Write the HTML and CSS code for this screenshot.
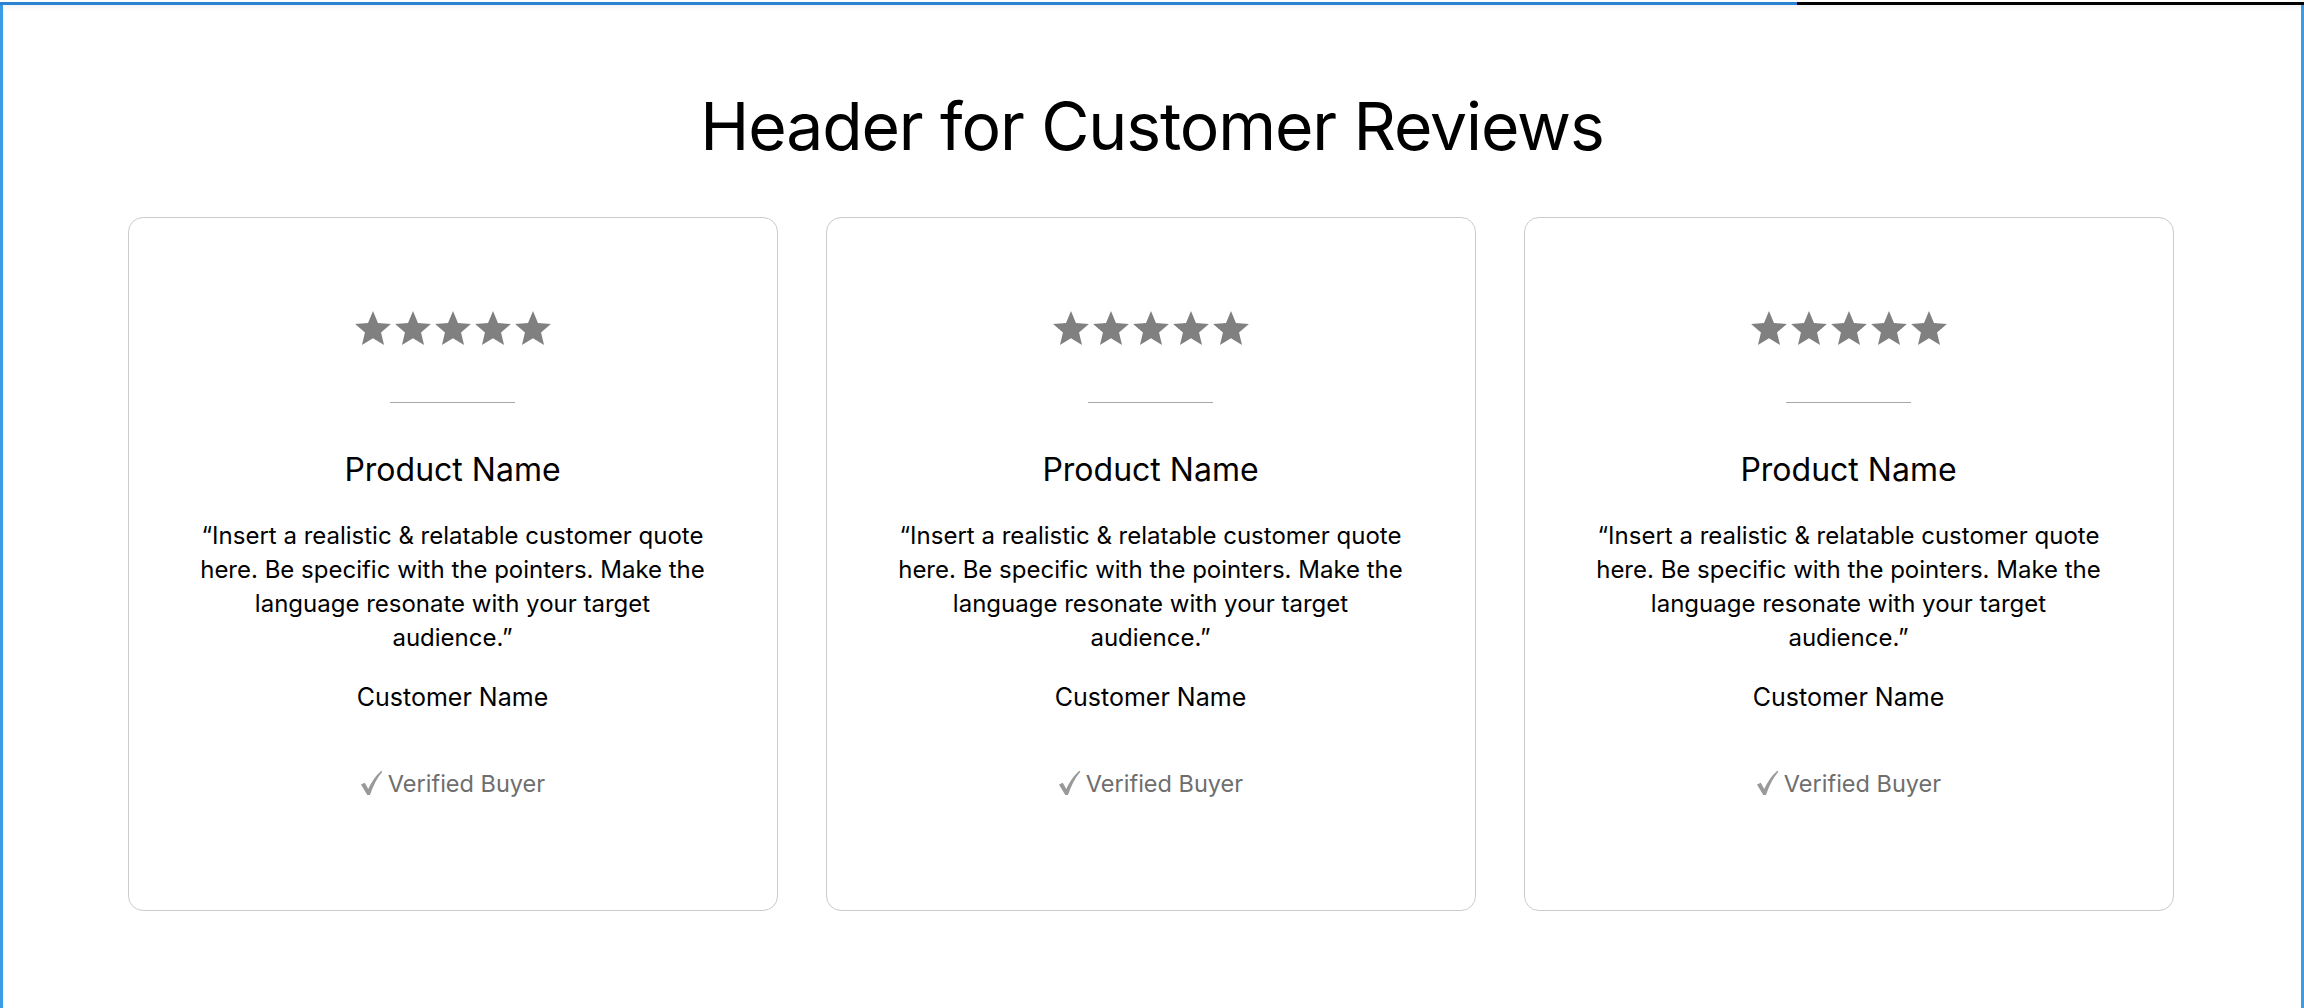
FILE: index.html
```html
<!DOCTYPE html>
<html lang="en">
<head>
    <meta charset="UTF-8">
    <meta name="viewport" content="width=device-width, initial-scale=1.0">
    <title>Customer Reviews</title>
    <link rel="stylesheet" href="styles.css">
</head>
<body>

    <div class="progres">
        <div class="progres-bara" style="width: 78%"></div>
    </div>

    <div class="pagina">
        <h1 class="titlu">Header for Customer Reviews</h1>

        <div class="recenzii">

            <div class="card">
                <div class="stele">
                    <svg viewBox="0 0 22.83 21.71"><path d="M11.41 0L14.58 7.63 22.83 8.29 16.55 13.67 18.46 21.71 11.41 17.4 4.36 21.71 6.27 13.67 0 8.29 8.24 7.63Z"/></svg>
                    <svg viewBox="0 0 22.83 21.71"><path d="M11.41 0L14.58 7.63 22.83 8.29 16.55 13.67 18.46 21.71 11.41 17.4 4.36 21.71 6.27 13.67 0 8.29 8.24 7.63Z"/></svg>
                    <svg viewBox="0 0 22.83 21.71"><path d="M11.41 0L14.58 7.63 22.83 8.29 16.55 13.67 18.46 21.71 11.41 17.4 4.36 21.71 6.27 13.67 0 8.29 8.24 7.63Z"/></svg>
                    <svg viewBox="0 0 22.83 21.71"><path d="M11.41 0L14.58 7.63 22.83 8.29 16.55 13.67 18.46 21.71 11.41 17.4 4.36 21.71 6.27 13.67 0 8.29 8.24 7.63Z"/></svg>
                    <svg viewBox="0 0 22.83 21.71"><path d="M11.41 0L14.58 7.63 22.83 8.29 16.55 13.67 18.46 21.71 11.41 17.4 4.36 21.71 6.27 13.67 0 8.29 8.24 7.63Z"/></svg>
                </div>
                <div class="linie"></div>
                <div class="produs">Product Name</div>
                <p class="citat">“Insert a realistic &amp; relatable customer quote here. Be specific with the pointers. Make the language resonate with your target audience.”</p>
                <div class="client">Customer Name</div>
                <div class="verificat">
                    <svg class="bifa" viewBox="0 0 24 26"><path d="M1 14.5L5 12.8 8.6 19.2Q14 7.5 22.2 0.2L23.3 1.3Q15.4 10.5 10.4 25.6L7.6 25.6Z"/></svg>
                    <span>Verified Buyer</span>
                </div>
            </div>

            <div class="card">
                <div class="stele">
                    <svg viewBox="0 0 22.83 21.71"><path d="M11.41 0L14.58 7.63 22.83 8.29 16.55 13.67 18.46 21.71 11.41 17.4 4.36 21.71 6.27 13.67 0 8.29 8.24 7.63Z"/></svg>
                    <svg viewBox="0 0 22.83 21.71"><path d="M11.41 0L14.58 7.63 22.83 8.29 16.55 13.67 18.46 21.71 11.41 17.4 4.36 21.71 6.27 13.67 0 8.29 8.24 7.63Z"/></svg>
                    <svg viewBox="0 0 22.83 21.71"><path d="M11.41 0L14.58 7.63 22.83 8.29 16.55 13.67 18.46 21.71 11.41 17.4 4.36 21.71 6.27 13.67 0 8.29 8.24 7.63Z"/></svg>
                    <svg viewBox="0 0 22.83 21.71"><path d="M11.41 0L14.58 7.63 22.83 8.29 16.55 13.67 18.46 21.71 11.41 17.4 4.36 21.71 6.27 13.67 0 8.29 8.24 7.63Z"/></svg>
                    <svg viewBox="0 0 22.83 21.71"><path d="M11.41 0L14.58 7.63 22.83 8.29 16.55 13.67 18.46 21.71 11.41 17.4 4.36 21.71 6.27 13.67 0 8.29 8.24 7.63Z"/></svg>
                </div>
                <div class="linie"></div>
                <div class="produs">Product Name</div>
                <p class="citat">“Insert a realistic &amp; relatable customer quote here. Be specific with the pointers. Make the language resonate with your target audience.”</p>
                <div class="client">Customer Name</div>
                <div class="verificat">
                    <svg class="bifa" viewBox="0 0 24 26"><path d="M1 14.5L5 12.8 8.6 19.2Q14 7.5 22.2 0.2L23.3 1.3Q15.4 10.5 10.4 25.6L7.6 25.6Z"/></svg>
                    <span>Verified Buyer</span>
                </div>
            </div>

            <div class="card">
                <div class="stele">
                    <svg viewBox="0 0 22.83 21.71"><path d="M11.41 0L14.58 7.63 22.83 8.29 16.55 13.67 18.46 21.71 11.41 17.4 4.36 21.71 6.27 13.67 0 8.29 8.24 7.63Z"/></svg>
                    <svg viewBox="0 0 22.83 21.71"><path d="M11.41 0L14.58 7.63 22.83 8.29 16.55 13.67 18.46 21.71 11.41 17.4 4.36 21.71 6.27 13.67 0 8.29 8.24 7.63Z"/></svg>
                    <svg viewBox="0 0 22.83 21.71"><path d="M11.41 0L14.58 7.63 22.83 8.29 16.55 13.67 18.46 21.71 11.41 17.4 4.36 21.71 6.27 13.67 0 8.29 8.24 7.63Z"/></svg>
                    <svg viewBox="0 0 22.83 21.71"><path d="M11.41 0L14.58 7.63 22.83 8.29 16.55 13.67 18.46 21.71 11.41 17.4 4.36 21.71 6.27 13.67 0 8.29 8.24 7.63Z"/></svg>
                    <svg viewBox="0 0 22.83 21.71"><path d="M11.41 0L14.58 7.63 22.83 8.29 16.55 13.67 18.46 21.71 11.41 17.4 4.36 21.71 6.27 13.67 0 8.29 8.24 7.63Z"/></svg>
                </div>
                <div class="linie"></div>
                <div class="produs">Product Name</div>
                <p class="citat">“Insert a realistic &amp; relatable customer quote here. Be specific with the pointers. Make the language resonate with your target audience.”</p>
                <div class="client">Customer Name</div>
                <div class="verificat">
                    <svg class="bifa" viewBox="0 0 24 26"><path d="M1 14.5L5 12.8 8.6 19.2Q14 7.5 22.2 0.2L23.3 1.3Q15.4 10.5 10.4 25.6L7.6 25.6Z"/></svg>
                    <span>Verified Buyer</span>
                </div>
            </div>

        </div>
    </div>

</body>
</html>
```

FILE: styles.css
```css
body {
    margin: 0;
    padding-top: 2px;
    background-color: white;
    font-family: Inter, "Noto Sans", sans-serif;
    color: black;
    height: 100vh;
    box-sizing: border-box;
    display: flex;
    flex-direction: column;
    overflow: hidden;
}

.progres {
    height: 3px;
    background-color: black;
    box-shadow: 0 2px 4px rgba(0, 0, 0, 0.08);
    position: relative;
    z-index: 1;
}
.progres-bara {
    height: 100%;
    background-color: #2a82d2;
}

.pagina {
    flex: 1;
    border-left: 3px solid #3a9de6;
    border-right: 3px solid #3a9de6;
    display: flex;
    flex-direction: column;
    align-items: center;
}

.titlu {
    margin: 88px 0 0 0;
    font-size: 66px;
    line-height: 66px;
    font-weight: 400;
    letter-spacing: -1.1px;
}

.recenzii {
    display: grid;
    grid-template-columns: repeat(3, 650px);
    gap: 48px;
    margin-top: 58px;
    margin-left: -3px;
}

.card {
    height: 694px;
    box-sizing: border-box;
    border: 1px solid #cbcbcb;
    border-radius: 15px;
    padding-top: 93px;
    display: flex;
    flex-direction: column;
    align-items: center;
    text-align: center;
}

.stele {
    display: flex;
    gap: 4px;
}
.stele svg {
    width: 36px;
    height: 34px;
    fill: #808080;
}

.linie {
    width: 125px;
    height: 1px;
    background-color: #a8a8a8;
    margin-top: 57px;
}

.produs {
    margin-top: 47px;
    font-size: 32px;
    line-height: 40px;
}

.citat {
    margin: 29px 0 0 0;
    max-width: 512px;
    font-size: 24px;
    line-height: 34px;
}

.client {
    margin-top: 26px;
    font-size: 25px;
    line-height: 32px;
}

.verificat {
    margin-top: 56px;
    display: flex;
    align-items: flex-end;
    gap: 5px;
    font-size: 23.5px;
    line-height: 30px;
    color: #6e6e6e;
}
.bifa {
    width: 23px;
    height: 26px;
    margin-bottom: 3px;
    fill: #999999;
}
```
